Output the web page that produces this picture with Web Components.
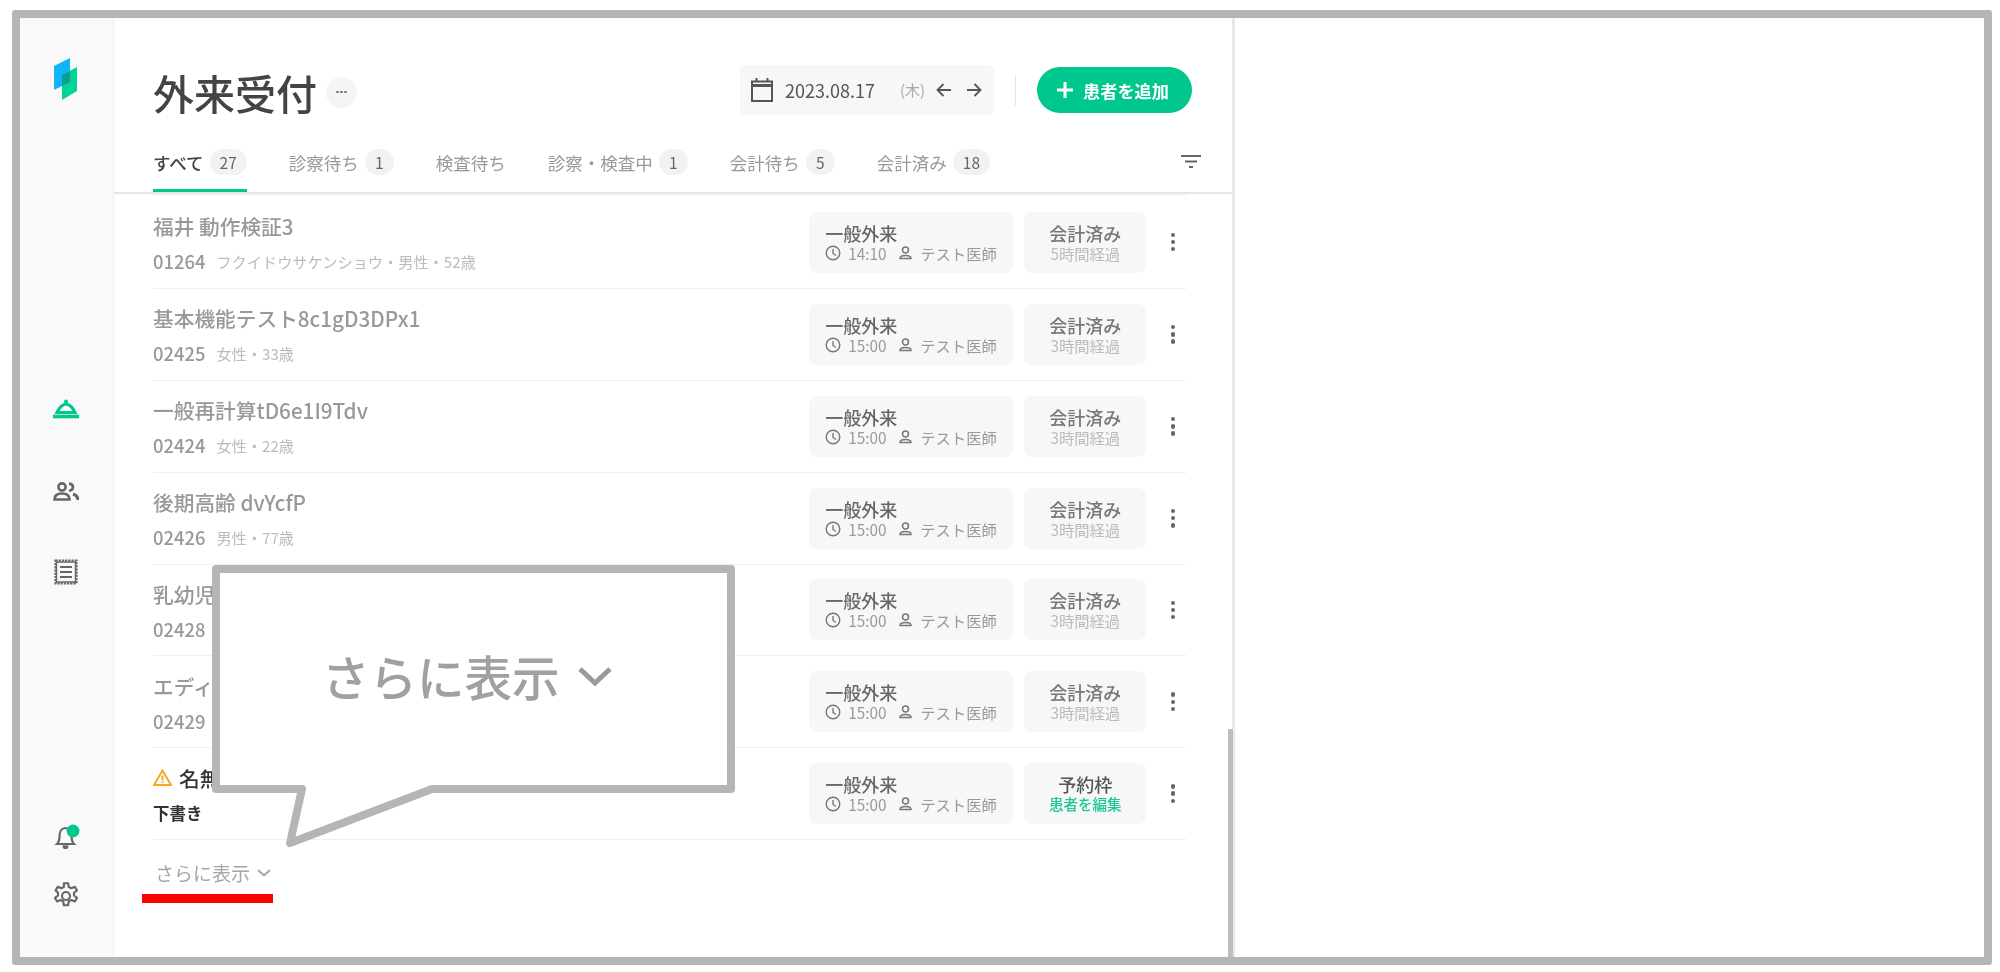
<!DOCTYPE html>
<html lang="ja">
<head>
<meta charset="utf-8">
<style>
  html, body { margin:0; padding:0; background:#fff; }
  body { width:2000px; height:972px; overflow:hidden; font-family:"Noto Sans CJK JP","Noto Sans",sans-serif; }
</style>
</head>
<body>
<app-frame>
  <side-nav slot="nav"></side-nav>
  <page-head slot="head"></page-head>
  <tab-bar slot="head"></tab-bar>
  <patient-row first name="福井 動作検証3" pid="01264" meta="フクイドウサケンショウ・男性・52歳" time="14:10" elapsed="5時間経過"></patient-row>
  <patient-row name="基本機能テスト8c1gD3DPx1" pid="02425" meta="女性・33歳" time="15:00" elapsed="3時間経過"></patient-row>
  <patient-row name="一般再計算tD6e1I9Tdv" pid="02424" meta="女性・22歳" time="15:00" elapsed="3時間経過"></patient-row>
  <patient-row name="後期高齢 dvYcfP" pid="02426" meta="男性・77歳" time="15:00" elapsed="3時間経過"></patient-row>
  <patient-row name="乳幼児" pid="02428" meta="女性・1歳" time="15:00" elapsed="3時間経過"></patient-row>
  <patient-row name="エディタ" pid="02429" meta="女性・30歳" time="15:00" elapsed="3時間経過"></patient-row>
  <patient-row draft name="名無し" pid="下書き" meta="" time="15:00" status="予約枠" elapsed="患者を編集"></patient-row>
  <more-link></more-link>
  <speech-callout slot="over"></speech-callout>
</app-frame>

<script>
// small helper so each class stays short
const shadow = (el, html) => {
  el.attachShadow({mode:'open'}).innerHTML = html;
};

class AppFrame extends HTMLElement {
  constructor() {
    super();
    shadow(this, `
      <style>
        :host { display:block; position:relative; box-sizing:border-box; margin:10px 0 0 12px; width:1980px; height:955px;
                border:8px solid #b5b5b5; border-radius:3px; background:#fff; overflow:hidden; filter:blur(.45px); }
        .app { display:flex; height:100%; width:1215px; }
        .main { flex:1; display:flex; flex-direction:column; min-width:0; border-right:3px solid #e8e8e8; }
        .list { flex:1; padding:0 46px 0 39px; overflow:hidden; }
        .bar { position:absolute; left:1208px; top:711px; width:5px; bottom:0; background:#bdbdbd; }
      </style>
      <div class="app">
        <slot name="nav"></slot>
        <div class="main">
          <slot name="head"></slot>
          <div class="list"><slot></slot></div>
        </div>
      </div>
      <div class="bar"></div>
      <slot name="over"></slot>
    `);
  }
}

class SideNav extends HTMLElement {
  constructor() {
    super();
    shadow(this, `
      <style>
        :host { display:flex; flex-direction:column; align-items:center; flex:none; width:94px; box-sizing:border-box;
                background:#f9f9f9; border-right:1px solid #f1f1f1; padding-top:40px; padding-right:2px; }
        svg { display:block; flex:none; }
        .bell { position:relative; margin-top:auto; }
      </style>
      <svg width="23" height="42" viewBox="0 0 23 42">
        <path d="M0 8 16 0V24L0 32Z" fill="#10b4f8"/>
        <path d="M8 17 23 9V33L8 42Z" fill="#00d498"/>
        <path d="M8 17 16 13V24L8 28Z" fill="#0aa091"/>
      </svg>
      <svg style="margin-top:299px" width="28" height="20" viewBox="0 0 28 20" fill="none" stroke="#00c78d">
        <circle cx="14" cy="2.500" r="2" fill="#00c78d" stroke="none"/>
        <path d="M5 13.500C7 9 10 5.500 14 5 18 5.500 21 9 23 13.500Z" stroke-width="3.200"/>
        <path d="M1 17.500H27" stroke-width="3.600"/>
      </svg>
      <svg style="margin-top:63px" width="26" height="19" viewBox="0 0 26 19" fill="none" stroke="#666" stroke-width="2.600">
        <circle cx="9" cy="5" r="3.600"/>
        <path d="M1.500 17.500C1.500 13.500 4.500 11.500 9 11.500S16.500 13.500 16.500 17.500Z"/>
        <path d="M16 1.600C19 2 20 4 20 5.200S19 8.400 16 8.800"/>
        <path d="M20 12C23 13 25 15 25 18" stroke-width="3.200"/>
      </svg>
      <svg style="margin-top:58px" width="24" height="26" viewBox="0 0 24 26" fill="none" stroke="#666" stroke-width="2.200">
        <path d="M1.500 1.500H22.500V24.500H1.500Z" stroke-dasharray="2.200 1"/>
        <path d="M2.500 3H21.500V23H2.500Z" stroke-width="1.400"/>
        <path d="M6 8H18M6 13H18M6 18H18"/>
      </svg>
      <svg class="bell" style="margin-right:-3px" width="26" height="25" viewBox="0 0 26 25" fill="none" stroke="#666" stroke-width="2.200">
        <path d="M3 20C5 18 5.500 16 5.500 12C5.500 7 8 4 11.500 4S17.500 7 17.500 12C17.500 16 18 18 20 20Z"/>
        <path d="M9.500 21.500C9.500 25 13.500 25 13.500 21.500" fill="#666"/>
        <circle cx="19" cy="7" r="6.400" fill="#00c78d" stroke="none"/>
      </svg>
      <svg style="margin:32px 0 46px" width="30" height="30" viewBox="0 0 24 24" fill="none" stroke="#666" stroke-width="1.700" stroke-linejoin="round">
        <path d="M10.300 1.800h3.400l.5 3 2.100 1 2.800-1.200 1.700 2.900-2.400 1.900v2.200l2.400 1.900-1.700 2.900-2.800-1.200-2.100 1-.5 3.200h-3.400l-.5-3.200-2.100-1-2.800 1.200-1.700-2.900 2.400-1.900V9.400L3.700 7.500l1.700-2.900 2.800 1.200 2.100-1z"/>
        <circle cx="12" cy="12" r="3.200"/>
      </svg>
    `);
  }
}

class PageHead extends HTMLElement {
  constructor() {
    super();
    shadow(this, `
      <style>
        :host { display:flex; align-items:center; height:97px; box-sizing:border-box; padding:47px 40px 0 39px; }
        h1 { margin:4px 0 0; font-size:41px; line-height:46px; font-weight:500; color:#444; }
        .dots { width:31px; height:31px; border-radius:50%; background:#f5f5f5; margin:4px 0 0 9px; display:flex; align-items:center; justify-content:center; }
        .dots i { width:2.400px; height:2.400px; background:#777; border-radius:50%; margin:0 .8px; }
        .date { margin-left:auto; width:254px; height:50px; background:#f7f7f7; border-radius:6px; display:flex; align-items:center; box-sizing:border-box; padding-left:11px; color:#555; }
        .day { font-size:18px; margin-left:12px; width:115px; line-height:24px; }
        .wk { font-size:15px; color:#aaa; width:36px; line-height:24px; }
        .date svg { flex:none; }
        .sep { width:1px; height:31px; background:#e8e8e8; margin:0 21px; }
        .add { width:155px; height:46px; border-radius:23px; background:#00c78d; color:#fff; font-size:17.200px; font-weight:700; display:flex; align-items:center; padding-left:19px; box-sizing:border-box; white-space:nowrap; }
        .add svg { margin-right:9px; }
      </style>
      <h1>外来受付</h1>
      <div class="dots"><i></i><i></i><i></i></div>
      <div class="date">
        <svg width="22" height="24" viewBox="0 0 22 24" fill="none" stroke="#555" stroke-width="2">
          <rect x="1" y="3.500" width="20" height="19.500"/>
          <path d="M1 7.500H21" stroke-width="3"/>
          <path d="M5.500 0V4M16.500 0V4"/>
        </svg>
        <span class="day">2023.08.17</span>
        <span class="wk">(木)</span>
        <svg width="16" height="14" viewBox="0 0 16 14" fill="none" stroke="#555" stroke-width="1.800"><path d="M15 7H2M7.500 1 1.500 7l6 6"/></svg>
        <svg style="margin-left:14px" width="16" height="14" viewBox="0 0 16 14" fill="none" stroke="#555" stroke-width="1.800"><path d="M1 7H14M8.500 1l6 6-6 6"/></svg>
      </div>
      <div class="sep"></div>
      <div class="add">
        <svg width="18" height="18" viewBox="0 0 18 18" stroke="#fff" stroke-width="3"><path d="M9 1V17M1 9H17"/></svg>
        患者を追加
      </div>
    `);
  }
}

class TabBar extends HTMLElement {
  constructor() {
    super();
    const tabs = [['すべて','27'],['診察待ち','1'],['検査待ち',''],['診察・検査中','1'],['会計待ち','5'],['会計済み','18']];
    shadow(this, `
      <style>
        :host { display:flex; align-items:stretch; height:79px; box-sizing:border-box; padding:0 31px 0 39px; border-bottom:2px solid #e6e6e6; position:relative; z-index:1; background:#fff; }
        .tab { display:flex; align-items:center; height:77px; margin-right:42px; box-sizing:border-box; padding-top:17px; font-size:17.500px; color:#999; white-space:nowrap; }
        .tab.on { color:#444; font-weight:500; border-bottom:3px solid #00c78d; padding-top:20px; }
        .tab b { font-weight:400; font-size:15.500px; min-width:29px; padding:0 10px; box-sizing:border-box; text-align:center; height:26px; line-height:26px; border-radius:13px; background:#f2f2f2; margin-left:6px; color:#666; }
        svg { margin:auto 0 auto auto; position:relative; top:8px; }
      </style>
      ${tabs.map((t,i)=>`<div class="tab${i==0?' on':''}">${t[0]}${t[1]?`<b>${t[1]}</b>`:''}</div>`).join('')}
      <svg width="20" height="13" viewBox="0 0 20 13" stroke="#666" stroke-width="2"><path d="M0 1H20M4 6.500H16M8 12H12"/></svg>
    `);
  }
}

class PatientRow extends HTMLElement {
  constructor() {
    super();
    const a = n => this.getAttribute(n) || '';
    const draft = this.hasAttribute('draft');
    shadow(this, `
      <style>
        :host { display:flex; align-items:center; height:91.850px; box-sizing:border-box; border-bottom:1px solid #efefef; }
        :host([first]) { height:95px; border-top:2px solid #f4f4f4; }
        .who { flex:1; min-width:0; color:#999; }
        .name { font-size:20.700px; line-height:32px; font-weight:500; display:flex; align-items:center; white-space:nowrap; }
        .sub { display:flex; align-items:center; line-height:26px; margin-top:6px; white-space:nowrap; }
        .id { font-size:18.400px; font-weight:500; }
        .meta { font-size:15.200px; color:#bbb; margin-left:11px; }
        :host([draft]) .who { color:#333; font-weight:700; }
        :host([draft]) .id { font-size:16.500px; font-weight:700; }
        .name svg { margin-right:7px; }
        .card { height:61px; background:#f7f7f7; border-radius:8px; box-sizing:border-box; flex:none; display:flex; flex-direction:column; justify-content:center; }
        .visit { width:204px; padding-left:16px; color:#666; }
        .t { font-size:18px; line-height:21px; font-weight:500; }
        .d { display:flex; align-items:center; font-size:15.300px; line-height:18px; color:#999; white-space:nowrap; }
        .d svg { flex:none; }
        .state { width:122px; margin-left:11px; align-items:center; color:#777; }
        .state .d { color:#bbb; }
        :host([draft]) .state { color:#555; }
        :host([draft]) .state .d { color:#1cc795; font-weight:500; font-size:14.500px; }
        .more { width:4.500px; margin:0 10.750px 0 24.500px; flex:none; display:flex; flex-direction:column; gap:2.700px; }
        .more i { width:4.500px; height:4.500px; border-radius:50%; background:#666; }
      </style>
      <div class="who">
        <div class="name">${draft?`<svg width="19" height="17" viewBox="0 0 19 17" fill="none" stroke="#f7a823" stroke-width="2"><path d="M9.500 1.500 18 16H1Z"/><path d="M9.500 6.500V11.500M9.500 12.500V14"/></svg>`:''}${a('name')}</div>
        <div class="sub"><span class="id">${a('pid')}</span>${a('meta')?`<span class="meta">${a('meta')}</span>`:''}</div>
      </div>
      <div class="card visit">
        <div class="t">一般外来</div>
        <div class="d">
          <svg width="16" height="16" viewBox="0 0 16 16" fill="none" stroke="#777" stroke-width="1.400"><circle cx="8" cy="8" r="6.800"/><path d="M8 4V8.500L11 10.500"/></svg>
          <span style="margin-left:7px;width:38px">${a('time')}</span>
          <svg style="margin-left:12px" width="15" height="14" viewBox="0 0 15 14" fill="none" stroke="#777" stroke-width="1.500"><circle cx="7.500" cy="4" r="3"/><path d="M2 12.500C2 10.500 4 9.500 7.500 9.500S13 10.500 13 12.500Z"/></svg>
          <span style="margin-left:7px">テスト医師</span>
        </div>
      </div>
      <div class="card state">
        <div class="t">${a('status')||'会計済み'}</div>
        <div class="d">${a('elapsed')}</div>
      </div>
      <div class="more"><i></i><i></i><i></i></div>
    `);
  }
}

class MoreLink extends HTMLElement {
  constructor() {
    super();
    shadow(this, `
      <style>
        :host { display:flex; align-items:center; margin:17.500px 0 0 2px; height:30px; color:#a5a5a5; font-size:19px; }
        svg { margin-left:7px; }
      </style>
      さらに表示
      <svg width="14" height="8" viewBox="0 0 14 8" fill="none" stroke="#a5a5a5" stroke-width="2"><path d="M1 1l6 5.500L13 1"/></svg>
    `);
  }
}

class SpeechCallout extends HTMLElement {
  constructor() {
    super();
    shadow(this, `
      <style>
        :host { position:absolute; left:0; top:0; right:0; bottom:0; pointer-events:none; display:block; }
        svg.shape { position:absolute; left:-20px; top:-18px; }
        .label { position:absolute; left:302px; top:625px; width:330px; height:66px; display:flex; align-items:center; font-size:47.500px; font-weight:500; line-height:66px; color:#a0a0a0; white-space:nowrap; }
        .label svg { margin-left:18px; flex:none; }
        .red { position:absolute; left:122px; top:876px; width:131px; height:9px; background:#f00; }
      </style>
      <svg class="shape" width="1000" height="972" viewBox="0 0 1000 972">
        <path d="M216 569H731V789H432L290 843 302 789H216Z" fill="#fff" stroke="#b5b5b5" stroke-width="8" stroke-linejoin="round"/>
      </svg>
      <div class="label">さらに表示<svg width="34" height="19" viewBox="0 0 34 19" fill="none" stroke="#9a9a9a" stroke-width="5"><path d="M2 2l15 14L32 2"/></svg></div>
      <div class="red"></div>
    `);
  }
}

customElements.define('app-frame', AppFrame);
customElements.define('side-nav', SideNav);
customElements.define('page-head', PageHead);
customElements.define('tab-bar', TabBar);
customElements.define('patient-row', PatientRow);
customElements.define('more-link', MoreLink);
customElements.define('speech-callout', SpeechCallout);
</script>
</body>
</html>
